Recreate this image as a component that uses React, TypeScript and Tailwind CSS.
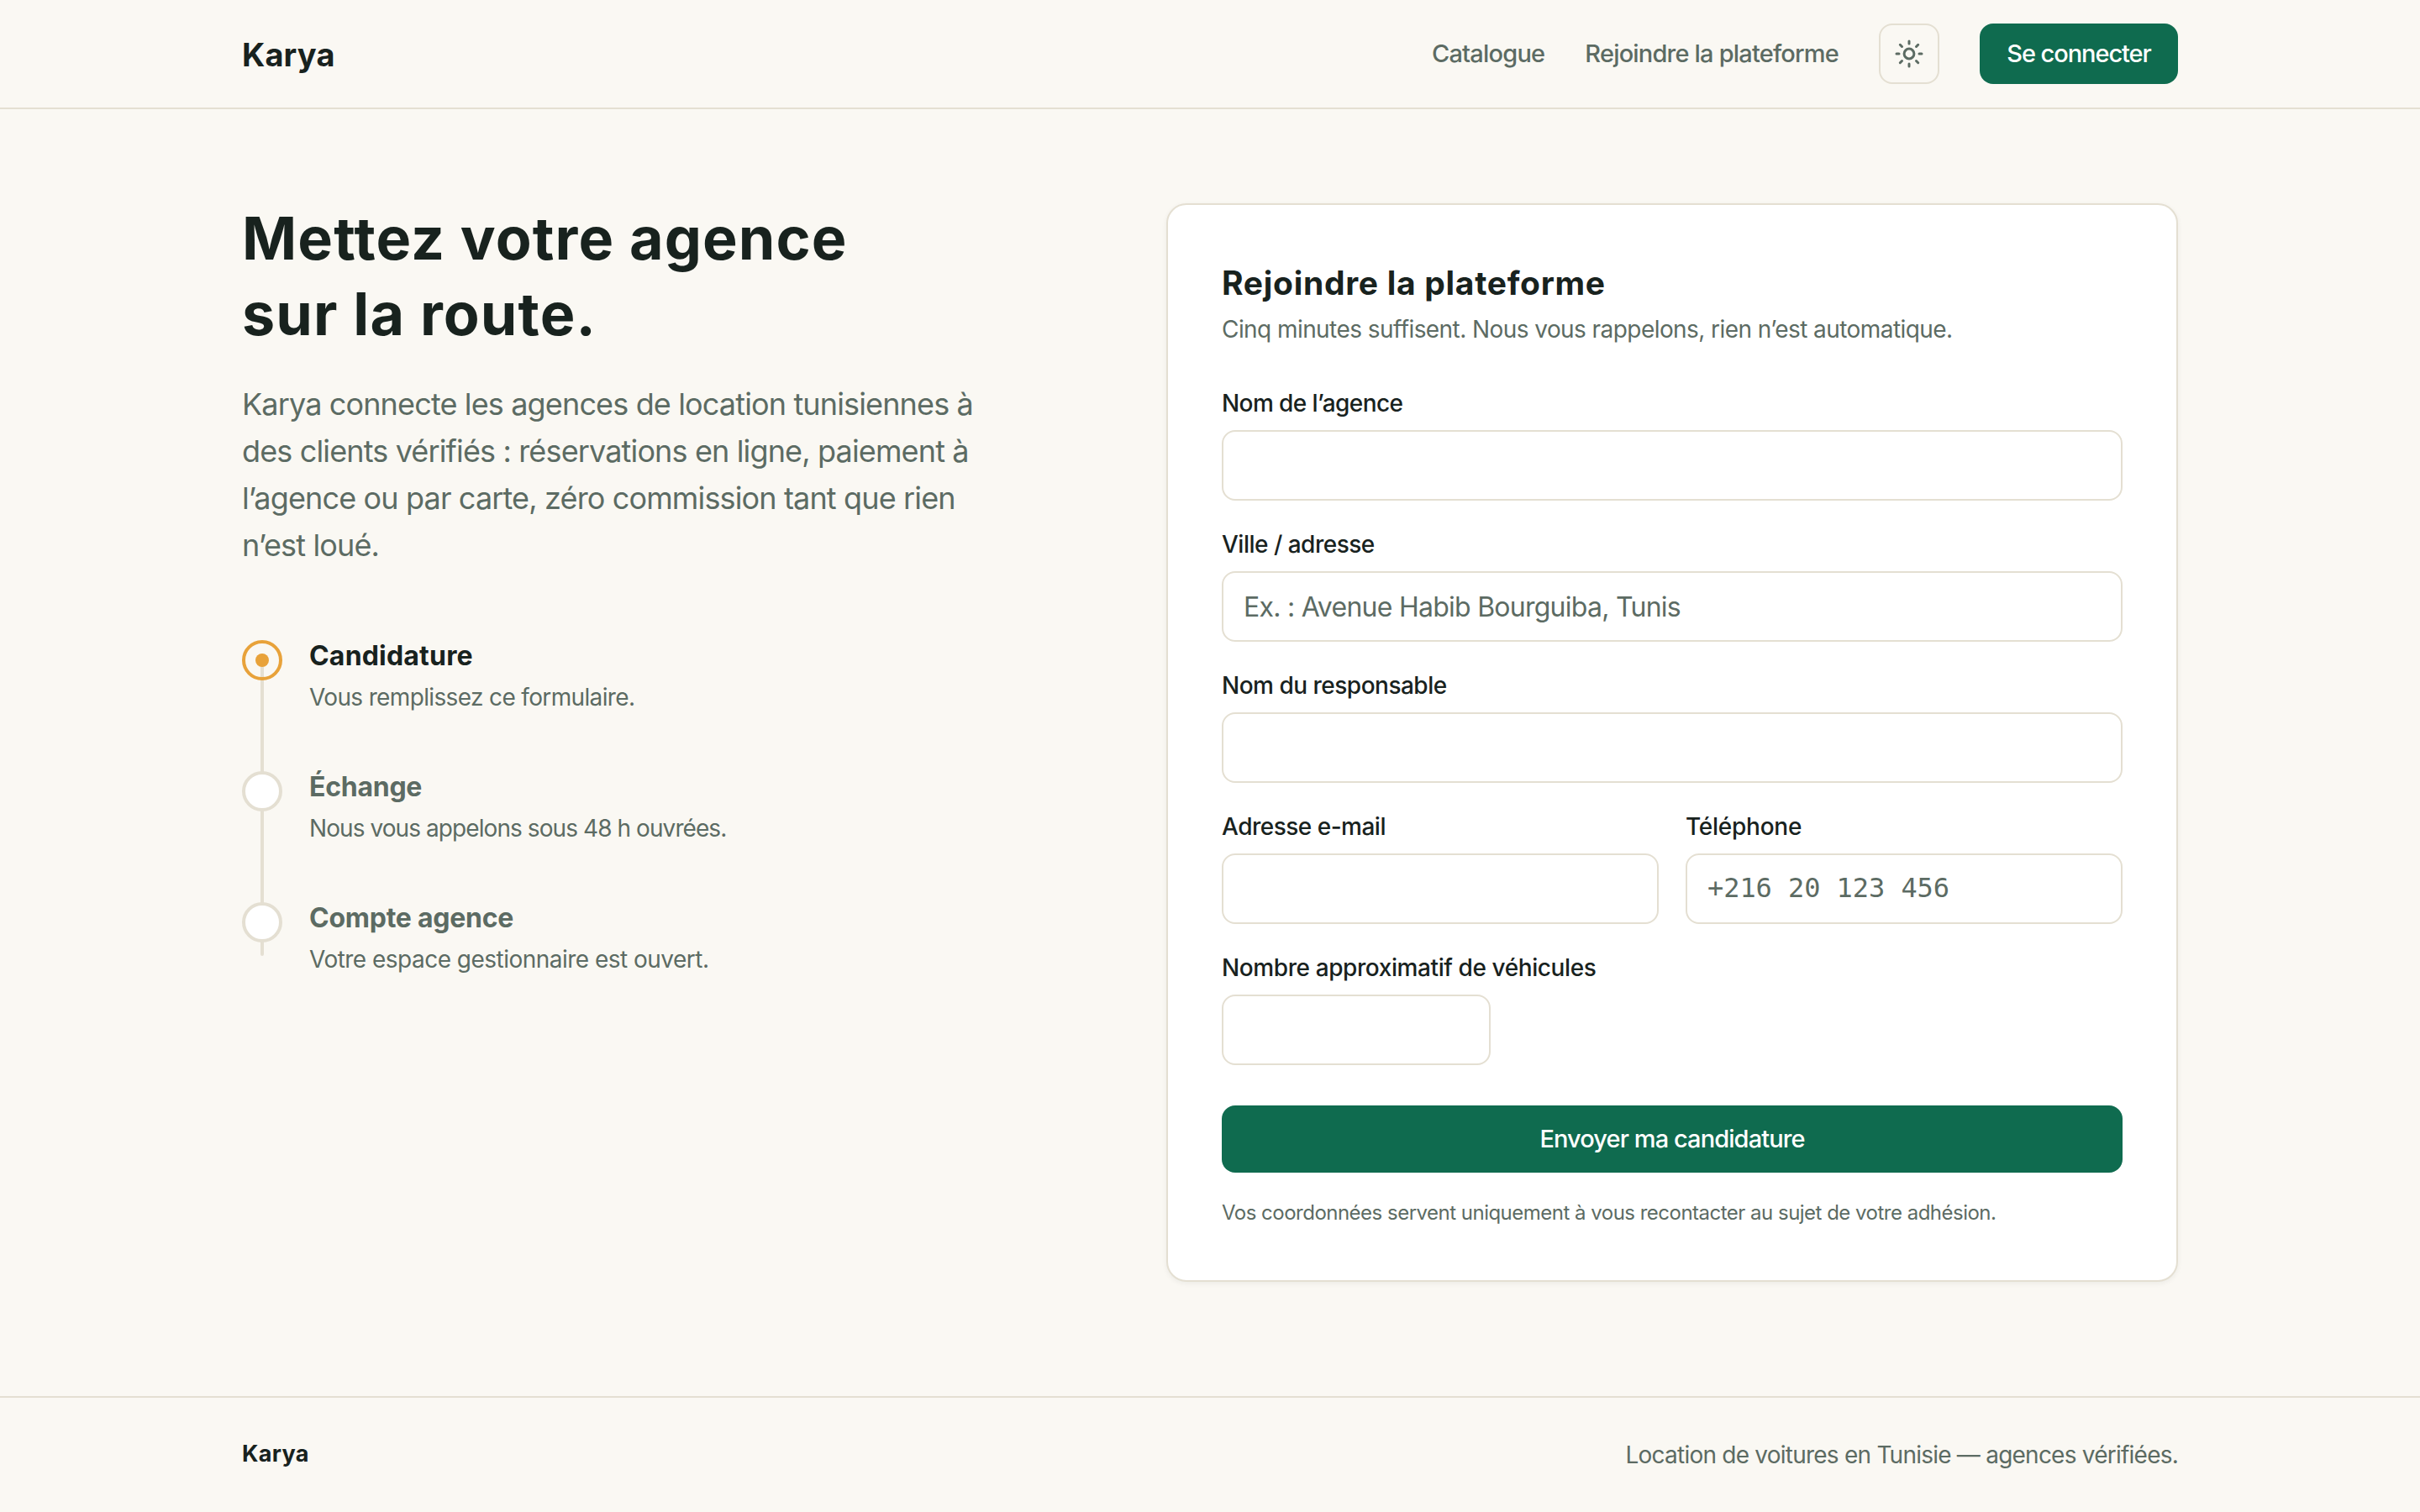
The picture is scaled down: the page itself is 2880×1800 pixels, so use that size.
import type { InputHTMLAttributes } from "react";
import clsx from "clsx";

const steps = [
  { title: "Candidature", text: "Vous remplissez ce formulaire.", tracking: "tracking-[-0.023em]" },
  { title: "Échange", text: "Nous vous appelons sous 48 h ouvrées.", tracking: "tracking-[-0.033em]" },
  { title: "Compte agence", text: "Votre espace gestionnaire est ouvert.", tracking: "tracking-[-0.0185em]" },
];

function SunIcon() {
  return (
    <svg
      className="size-10"
      viewBox="-20 -20 40 40"
      fill="none"
      stroke="currentColor"
      strokeWidth="3"
      strokeLinecap="round"
      aria-hidden="true"
    >
      <circle r="5.9" />
      <path d="M0-15v3M0 12v3M-15 0h3M12 0h3" />
      <path d="M-10.7-10.7l2.2 2.2M8.5 8.5l2.2 2.2M-10.7 10.7l2.2-2.2M8.5-8.5l2.2-2.2" />
    </svg>
  );
}

type FieldProps = InputHTMLAttributes<HTMLInputElement> & {
  label: string;
  labelClassName?: string;
};

function Field({ label, labelClassName, className, id, ...props }: FieldProps) {
  return (
    <div>
      <label
        htmlFor={id}
        className={clsx("block text-[28px] leading-10 font-medium", labelClassName ?? "tracking-[-0.018em]")}
      >
        {label}
      </label>
      <input
        id={id}
        className={clsx(
          "mt-3 block h-[84px] rounded-2xl border-2 border-[#e4dfd2] bg-white px-6 text-[32px] placeholder:text-[#5c6b63] placeholder:opacity-100",
          className ?? "w-full",
        )}
        {...props}
      />
    </div>
  );
}

function Header() {
  return (
    <header className="border-b-2 border-[#e4dfd2]">
      <div className="mx-auto flex h-32 w-[2304px] items-center justify-between">
        <a className="pt-0.5 text-[38px] font-bold tracking-[0.003em]">Karya</a>
        <nav className="flex items-center gap-12 text-[29px] font-medium text-[#5c6b63]">
          <a className="tracking-[-0.027em]">Catalogue</a>
          <a className="tracking-[-0.028em]">Rejoindre la plateforme</a>
          <button
            type="button"
            aria-label="Changer de thème"
            className="flex size-[72px] items-center justify-center rounded-2xl border-2 border-[#e4dfd2]"
          >
            <SunIcon />
          </button>
          <a className="flex h-[72px] w-[236px] items-center justify-center rounded-2xl bg-[#0f6b4f] tracking-[-0.037em] text-white">
            Se connecter
          </a>
        </nav>
      </div>
    </header>
  );
}

function Steps() {
  return (
    <ol className="relative mt-[85px]">
      <li aria-hidden="true" className="absolute top-4 left-[22px] h-[360px] w-1 rounded-full bg-[#e4dfd2]" />
      {steps.map((step, index) => (
        <li key={step.title} className="relative flex h-[156px] gap-8">
          <span
            className={clsx(
              "flex size-12 shrink-0 items-center justify-center rounded-full border-4",
              index === 0 ? "border-[#e8a23a]" : "border-[#e4dfd2] bg-white",
            )}
          >
            {index === 0 && <span className="size-4 rounded-full bg-[#e8a23a]" />}
          </span>
          <div className="-mt-px">
            <h3
              className={clsx(
                "text-[32px] leading-10 font-bold",
                index === 0 ? "tracking-[0.006em]" : "tracking-[-0.008em] text-[#5c6b63]",
              )}
            >
              {step.title}
            </h3>
            <p className={clsx("mt-[9px] text-[28px] leading-10 text-[#5c6b63]", step.tracking)}>{step.text}</p>
          </div>
        </li>
      ))}
    </ol>
  );
}

function JoinForm() {
  return (
    <form className="w-[1204px] rounded-3xl border-2 border-[#e4dfd2] bg-white px-16 pt-[69px] pb-[62px] shadow-[0_2px_6px_rgba(24,34,30,0.06)]">
      <h2 className="text-[39px] leading-[48px] font-bold tracking-[0.018em]">Rejoindre la plateforme</h2>
      <p className="mt-[11px] text-[28px] leading-10 tracking-[-0.0202em] text-[#5c6b63]">
        Cinq minutes suffisent. Nous vous rappelons, rien n’est automatique.
      </p>

      <div className="mt-12 flex flex-col gap-8">
        <Field id="agence" label="Nom de l’agence" labelClassName="tracking-[-0.0206em]" />
        <Field
          id="adresse"
          label="Ville / adresse"
          placeholder="Ex. : Avenue Habib Bourguiba, Tunis"
          className="w-full tracking-[-0.0232em]"
        />
        <Field id="responsable" label="Nom du responsable" />
        <div className="grid grid-cols-2 gap-8">
          <Field id="email" type="email" label="Adresse e-mail" />
          <Field
            id="telephone"
            type="tel"
            label="Téléphone"
            labelClassName="tracking-[-0.009em]"
            placeholder="+216 20 123 456"
            className="w-full pb-[3px] font-['DejaVu_Sans_Mono',monospace] tracking-[-0.002em]"
          />
        </div>
        <Field
          id="vehicules"
          label="Nombre approximatif de véhicules"
          labelClassName="tracking-[-0.0145em]"
          className="w-80"
        />
      </div>

      <button
        type="submit"
        className="mt-12 h-20 w-full rounded-2xl bg-[#0f6b4f] text-[29px] font-medium tracking-[-0.0315em] text-white"
      >
        Envoyer ma candidature
      </button>
      <p className="mt-[30px] text-2xl leading-9 tracking-[-0.0212em] text-[#5c6b63]">
        Vos coordonnées servent uniquement à vous recontacter au sujet de votre adhésion.
      </p>
    </form>
  );
}

export default function App() {
  return (
    <div className="min-h-screen bg-[#faf8f3] font-['Inter',sans-serif] text-[#18221e]">
      <Header />

      <main className="mx-auto flex w-[2304px] items-start justify-between pt-28 pb-[136px]">
        <div>
          <h1 className="-mt-[3px] text-[70px] leading-[90px] font-bold tracking-[0.016em]">
            Mettez votre agence
            <br />
            sur la route.
          </h1>
          <p className="mt-[34px] w-[884px] text-4xl leading-[56px] tracking-[-0.0238em] text-[#5c6b63]">
            Karya connecte les agences de location tunisiennes à des clients vérifiés : réservations en ligne,
            paiement à l’agence ou par carte, zéro commission tant que rien n’est loué.
          </p>
          <Steps />
        </div>
        <JoinForm />
      </main>

      <footer className="border-t-2 border-[#e4dfd2]">
        <div className="mx-auto flex h-[136px] w-[2304px] items-center justify-between">
          <span className="pb-0.5 text-[27px] font-bold tracking-[0.012em]">Karya</span>
          <p className="text-[28px] tracking-[-0.0275em] text-[#5c6b63]">
            Location de voitures en Tunisie — agences vérifiées.
          </p>
        </div>
      </footer>
    </div>
  );
}
